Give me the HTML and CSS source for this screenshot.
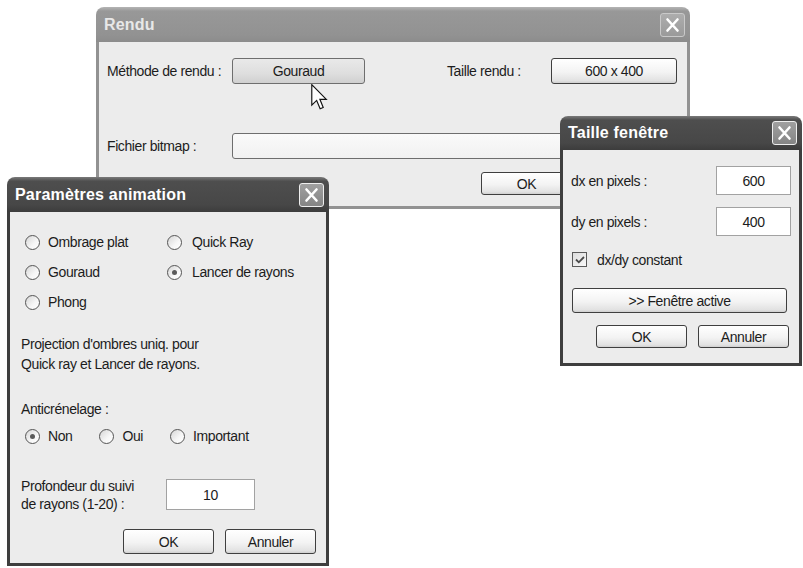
FILE: index.html
```html
<!DOCTYPE html>
<html lang="fr">
<head>
  <meta charset="UTF-8">
  <meta name="viewport" content="width=device-width, initial-scale=1.0">
  <title>Rendu</title>
  <link rel="stylesheet" href="styles.css">
</head>
<body>
  <div class="desktop">

    <!-- fenêtre de fond, inactive -->
    <section class="window inactive rendu">
      <header class="titlebar">
        <span class="title">Rendu</span>
        <span class="close"><svg viewBox="0 0 25 24" width="25" height="24"><path d="M7.5 6.5 L17.5 17.5 M17.5 6.5 L7.5 17.5" stroke="#fff" stroke-width="2.6" stroke-linecap="round"/></svg></span>
      </header>
      <div class="body rendu-body">
        <div class="rendu-row">
          <span class="lbl-method">Méthode de rendu :</span>
          <button class="btn btn-gouraud">Gouraud</button>
          <span class="lbl-size">Taille rendu :</span>
          <button class="btn btn-size">600 x 400</button>
        </div>
        <div class="rendu-row row-file">
          <span class="lbl-method">Fichier bitmap :</span>
          <span class="file-field"></span>
        </div>
        <div class="actions rendu-actions">
          <button class="btn">OK</button>
        </div>
      </div>
    </section>

    <!-- paramètres animation -->
    <section class="window active anim">
      <header class="titlebar">
        <span class="title">Paramètres animation</span>
        <span class="close"><svg viewBox="0 0 25 24" width="25" height="24"><path d="M7.5 6.5 L17.5 17.5 M17.5 6.5 L7.5 17.5" stroke="#fff" stroke-width="2.6" stroke-linecap="round"/></svg></span>
      </header>
      <div class="body anim-body">
        <div class="radio-grid">
          <label class="opt"><span class="radio"></span>Ombrage plat</label>
          <label class="opt"><span class="radio"></span>Quick Ray</label>
          <label class="opt"><span class="radio"></span>Gouraud</label>
          <label class="opt"><span class="radio on"></span>Lancer de rayons</label>
          <label class="opt"><span class="radio"></span>Phong</label>
        </div>
        <p class="note">Projection d'ombres uniq. pour<br>Quick ray et Lancer de rayons.</p>
        <p class="aa-title">Anticrénelage :</p>
        <div class="aa-row">
          <label class="opt"><span class="radio on"></span>Non</label>
          <label class="opt"><span class="radio"></span>Oui</label>
          <label class="opt"><span class="radio"></span>Important</label>
        </div>
        <div class="depth-row">
          <span class="depth-lbl">Profondeur du suivi<br>de rayons (1-20) :</span>
          <span class="field depth-field">10</span>
        </div>
        <div class="actions anim-actions">
          <button class="btn">OK</button>
          <button class="btn">Annuler</button>
        </div>
      </div>
    </section>

    <!-- taille fenêtre -->
    <section class="window active taille">
      <header class="titlebar">
        <span class="title">Taille fenêtre</span>
        <span class="close"><svg viewBox="0 0 25 24" width="25" height="24"><path d="M7.5 6.5 L17.5 17.5 M17.5 6.5 L7.5 17.5" stroke="#fff" stroke-width="2.6" stroke-linecap="round"/></svg></span>
      </header>
      <div class="body taille-body">
        <div class="px-row">
          <span>dx en pixels :</span>
          <span class="field px-field">600</span>
        </div>
        <div class="px-row px-row-2">
          <span>dy en pixels :</span>
          <span class="field px-field">400</span>
        </div>
        <label class="check-row"><span class="check"><svg viewBox="0 0 14 14" width="14" height="14"><path d="M3 6.5 L5.8 9.3 L11 4" fill="none" stroke="#4a4a4a" stroke-width="1.8"/></svg></span>dx/dy constant</label>
        <button class="btn btn-wide">&gt;&gt; Fenêtre active</button>
        <div class="actions taille-actions">
          <button class="btn">OK</button>
          <button class="btn">Annuler</button>
        </div>
      </div>
    </section>

    <svg class="pointer" viewBox="0 0 13 21" width="17" height="27">
      <path d="M0.5 0.5 L0.5 16.5 L4.3 12.8 L7 19.3 L9.4 18.3 L6.8 11.9 L11.8 11.9 Z" fill="#fff" stroke="#111" stroke-width="0.9" stroke-linejoin="miter"/>
    </svg>
  </div>
</body>
</html>
```

FILE: styles.css
```css
body {
  margin: 0;
  background-color: #fff;
  font-family: "Liberation Sans", Arial, sans-serif;
  font-size: 14px;
  letter-spacing: -0.4px;
  color: #1c1c1c;
  white-space: nowrap;
}
.desktop {
  position: relative;
  width: 803px;
  height: 568px;
  overflow: hidden;
}
.window {
  position: absolute;
  display: flex;
  flex-direction: column;
  box-sizing: border-box;
}
.titlebar {
  flex: none;
  height: 35px;
  display: flex;
  align-items: center;
  justify-content: space-between;
  padding: 0 5px 0 8px;
  border-radius: 8px 8px 0 0;
  font-family: "Liberation Sans", Arial, sans-serif;
  font-weight: bold;
  font-size: 16px;
  letter-spacing: 0.2px;
}
.active .titlebar {
  background: linear-gradient(#7a7a7a, #4e4e4e 12%, #474747 80%, #3c3c3c);
  color: #fff;
}
.inactive .titlebar {
  background: linear-gradient(#b4b4b4, #989898 12%, #929292 80%, #8c8c8c);
  color: #e8e8e8;
}
.close {
  display: block;
  width: 25px;
  height: 24px;
  box-sizing: border-box;
  border: 1px solid #eee;
  border-radius: 3px;
  background: linear-gradient(#a0a0a0, #858585);
}
.close svg {
  display: block;
  margin: -1px;
}
.inactive .close {
  border-color: #c9c9c9;
  background: linear-gradient(#adadad, #9a9a9a);
}
.body {
  flex: 1;
  background-color: #ececec;
  border: 3px solid #3e3e3e;
  border-top: none;
  display: flex;
  flex-direction: column;
}
.inactive .body {
  border-color: #929292;
}
p {
  margin: 0;
}

/* boutons et champs */
.btn {
  width: 91px;
  height: 25px;
  padding: 0;
  box-sizing: border-box;
  border: 1px solid #3f3f3f;
  border-radius: 3px;
  background: linear-gradient(#ffffff, #f3f3f3 55%, #e2e2e2 90%, #cfcfcf);
  font: inherit;
  letter-spacing: inherit;
  color: #1c1c1c;
}
.field {
  box-sizing: border-box;
  display: flex;
  align-items: center;
  justify-content: center;
  background-color: #fff;
  border: 1px solid #a2a2a2;
}
.actions {
  display: flex;
  justify-content: flex-end;
  gap: 11px;
}
.opt {
  display: flex;
  align-items: center;
  gap: 8px;
}
.radio {
  position: relative;
  width: 15px;
  height: 15px;
  box-sizing: border-box;
  border-radius: 50%;
  border: 1px solid #555;
  background: linear-gradient(135deg, #d6d6d6, #f7f7f7 60%, #fff);
}
.radio.on::after {
  content: "";
  position: absolute;
  left: 4px;
  top: 4px;
  width: 5px;
  height: 5px;
  border-radius: 50%;
  background-color: #5a5a5a;
}

/* Rendu */
.rendu {
  left: 96px;
  top: 7px;
  width: 594px;
  height: 202px;
}
.rendu-body {
  padding: 16px 0 0 8px;
}
.rendu-row {
  display: flex;
  align-items: center;
  height: 26px;
}
.lbl-method {
  width: 125px;
}
.btn-gouraud {
  width: 133px;
  height: 26px;
  border-color: #6e6e6e;
  background: linear-gradient(#e9e9e9, #dedede 60%, #d0d0d0);
}
.lbl-size {
  width: 104px;
  margin-left: 82px;
}
.btn-size {
  width: 126px;
  height: 26px;
}
.row-file {
  margin-top: 49px;
}
.file-field {
  width: 445px;
  height: 26px;
  box-sizing: border-box;
  border: 1px solid #6e6e6e;
  border-radius: 3px;
  background: linear-gradient(#fafafa, #f1f1f1);
}
.rendu-actions {
  margin-top: 13px;
  padding-right: 115px;
}
.rendu-actions .btn {
  height: 23px;
}

/* Paramètres animation */
.anim {
  left: 7px;
  top: 177px;
  width: 322px;
  height: 389px;
}
.anim-body {
  padding: 15px 10px 0 11px;
}
.radio-grid {
  display: grid;
  grid-template-columns: 142px auto;
  grid-auto-rows: 30px;
  margin-left: 4px;
}
.radio-grid .opt:nth-child(even) {
  gap: 10px;
}
.note {
  margin-top: 17px;
  line-height: 20px;
}
.aa-title {
  margin-top: 25px;
  line-height: 20px;
}
.aa-row {
  display: flex;
  height: 20px;
  margin-top: 7px;
  margin-left: 4px;
  gap: 27px;
}
.depth-row {
  display: flex;
  align-items: flex-start;
  margin-top: 31px;
}
.depth-lbl {
  width: 145px;
  line-height: 18px;
}
.depth-field {
  width: 89px;
  height: 31px;
  margin-top: 2px;
}
.anim-actions {
  margin-top: 16px;
}

/* Taille fenêtre */
.taille {
  left: 560px;
  top: 116px;
  width: 242px;
  height: 250px;
}
.taille .titlebar {
  height: 34px;
}
.taille-body {
  padding: 16px 8px 0 8px;
}
.px-row {
  display: flex;
  align-items: center;
  justify-content: space-between;
}
.px-row-2 {
  margin-top: 12px;
}
.px-field {
  width: 75px;
  height: 29px;
}
.check-row {
  display: flex;
  align-items: center;
  gap: 10px;
  margin: 16px 0 0 1px;
  height: 15px;
}
.check {
  width: 15px;
  height: 15px;
  box-sizing: border-box;
  border: 1px solid #5a5a5a;
  background: linear-gradient(135deg, #dcdcdc, #fafafa);
}
.check svg {
  display: block;
  margin: -0.5px;
}
.btn-wide {
  width: 215px;
  margin: 21px 0 0 1px;
}
.taille-actions {
  margin-top: 12px;
  padding-right: 2px;
}
.taille-actions .btn {
  height: 23px;
}

.pointer {
  position: absolute;
  left: 311px;
  top: 84px;
}
```
